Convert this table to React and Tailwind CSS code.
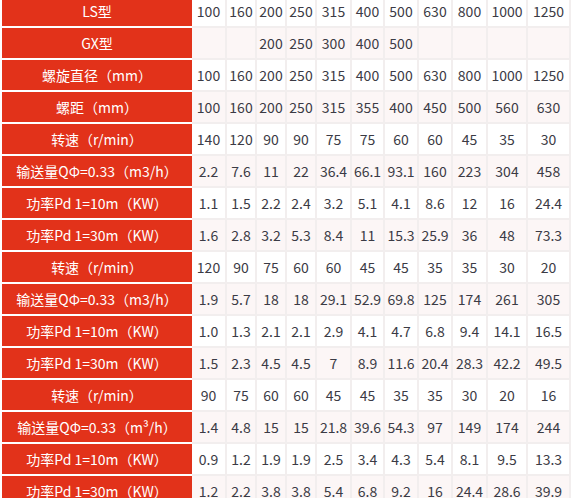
// App.jsx — screw conveyor spec table

const widths = [190, 35, 30, 30, 30, 35, 33, 34, 34, 35, 40, 43];

const rows = [
    ["LS型", ["100", "160", "200", "250", "315", "400", "500", "630", "800", "1000", "1250"]],
    ["GX型", ["", "", "200", "250", "300", "400", "500", "", "", "", ""]],
    ["螺旋直径（mm）", ["100", "160", "200", "250", "315", "400", "500", "630", "800", "1000", "1250"]],
    ["螺距（mm）", ["100", "160", "200", "250", "315", "355", "400", "450", "500", "560", "630"]],
    ["转速（r/min）", ["140", "120", "90", "90", "75", "75", "60", "60", "45", "35", "30"]],
    ["输送量QΦ=0.33（m3/h）", ["2.2", "7.6", "11", "22", "36.4", "66.1", "93.1", "160", "223", "304", "458"]],
    ["功率Pd 1=10m（KW）", ["1.1", "1.5", "2.2", "2.4", "3.2", "5.1", "4.1", "8.6", "12", "16", "24.4"]],
    ["功率Pd 1=30m（KW）", ["1.6", "2.8", "3.2", "5.3", "8.4", "11", "15.3", "25.9", "36", "48", "73.3"]],
    ["转速（r/min）", ["120", "90", "75", "60", "60", "45", "45", "35", "35", "30", "20"]],
    ["输送量QΦ=0.33（m3/h）", ["1.9", "5.7", "18", "18", "29.1", "52.9", "69.8", "125", "174", "261", "305"]],
    ["功率Pd 1=10m（KW）", ["1.0", "1.3", "2.1", "2.1", "2.9", "4.1", "4.7", "6.8", "9.4", "14.1", "16.5"]],
    ["功率Pd 1=30m（KW）", ["1.5", "2.3", "4.5", "4.5", "7", "8.9", "11.6", "20.4", "28.3", "42.2", "49.5"]],
    ["转速（r/min）", ["90", "75", "60", "60", "45", "45", "35", "35", "30", "20", "16"]],
    ["输送量QΦ=0.33（m³/h）", ["1.4", "4.8", "15", "15", "21.8", "39.6", "54.3", "97", "149", "174", "244"]],
    ["功率Pd 1=10m（KW）", ["0.9", "1.2", "1.9", "1.9", "2.5", "3.4", "4.3", "5.4", "8.1", "9.5", "13.3"]],
    ["功率Pd 1=30m（KW）", ["1.2", "2.2", "3.8", "3.8", "5.4", "6.8", "9.2", "16", "24.4", "28.6", "39.9"]],
];

export default function App() {
    return (
        <div className="w-[575px] h-[498px] overflow-hidden bg-white pl-[2px] font-['Noto_Sans_CJK_SC','Noto_Sans',sans-serif]">
            <table className="table-fixed border-separate border-spacing-0 w-[569px] -mt-[4px] text-[14px]">
                <colgroup>
                    {widths.map((w, i) => (
                        <col key={i} style={{ width: w }} />
                    ))}
                </colgroup>
                <tbody>
                    {rows.map(([label, cells], r) => (
                        <tr key={r} className={r % 2 === 1 ? "bg-[#fcf6f6]" : "bg-white"}>
                            <td className="h-[32px] p-0 text-center text-white bg-[#e2321a] border-b-2 border-white leading-none whitespace-nowrap">
                                {label}
                            </td>
                            {cells.map((c, i) => (
                                <td
                                    key={i}
                                    className="h-[32px] p-0 text-center text-[#3b3b45] border-b-2 border-r-2 border-[#f2eeee] leading-none whitespace-nowrap"
                                >
                                    {c}
                                </td>
                            ))}
                        </tr>
                    ))}
                </tbody>
            </table>
        </div>
    );
}
